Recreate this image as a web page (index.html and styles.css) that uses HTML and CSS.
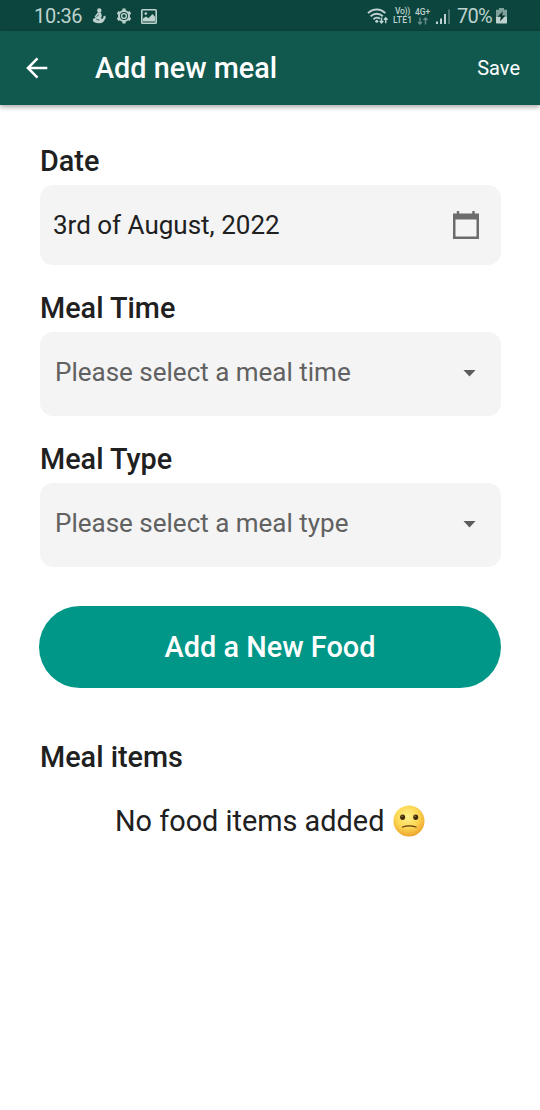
FILE: index.html
```html
<!DOCTYPE html>
<html lang="en">
<head>
<meta charset="utf-8">
<title>Add new meal</title>
<link rel="stylesheet" href="styles.css">
</head>
<body>
<div class="status">
  <span class="clock">10:36</span>
  <svg class="ic-app" width="14" height="16" viewBox="0 0 14 16" fill="currentColor"><circle cx="7.300" cy="2.500" r="2.200"/><path d="M5.800 4.500h3.200l.8 3.300-.9 2.700 1.700.3.900-1.400-.8-.5 2.500-1.500.8 3-.9-.2c-.5 3-2.600 5-6 5-3.300 0-5.700-.7-6.200-2.600-.4-1.800 1-2.700 2.800-2.600L2.600 8.600z"/><path d="M4.500 8.600l2.300-1.800M4.300 11.300l3 .8" stroke="#0c453d" stroke-width=".8"/></svg>
  <svg class="ic-gear" width="16" height="16" viewBox="0 0 16 16" fill="none" stroke="currentColor"><circle cx="8" cy="8" r="5" stroke-width="2"/><circle cx="8" cy="8" r="2.400" stroke-width="1.400"/><path d="M8 .6v2.600M8 12.800v2.600M1.600 4.300l2.200 1.300M12.200 10.400l2.200 1.300M1.600 11.700l2.200-1.300M12.200 5.600l2.200-1.300" stroke-width="3.200"/></svg>
  <svg class="ic-pic" width="16" height="15" viewBox="0 0 16 15"><rect x=".8" y=".8" width="14.400" height="13.400" rx=".8" fill="none" stroke="currentColor" stroke-width="1.600"/><path d="M2 12.500V9.500L5 7.500l2.500 1.800 4-4.300 2.500 2.800v4.700z" fill="currentColor"/><circle cx="4.800" cy="4.600" r="1.300" fill="currentColor"/></svg>
  <span class="spring"></span>
  <svg class="ic-wifi" width="22" height="17" viewBox="0 0 22 17" fill="none" stroke="currentColor" stroke-width="1.900"><path d="M1 5.200C6 .2 13.500.2 18.300 5.200M3.600 8.300c3.400-3.400 8.700-3.400 12.200 0M6.500 11.200c2-1.900 4.800-1.900 6.500-.3"/><circle cx="9.800" cy="13.300" r="1.500" fill="currentColor" stroke="none"/><path d="M14.500 9.500v5.500M12.700 13.100l1.800 1.900 1.800-1.900M18.700 15.300V9.800M16.900 11.700l1.800-1.900 1.800 1.900" stroke-width="1.400"/></svg>
  <span class="stack volte"><span class="vo">Vo))</span><span class="lte">LTE1</span></span>
  <span class="stack net"><span>4G+</span><svg width="12" height="8" viewBox="0 0 12 8" fill="none" stroke="currentColor" stroke-width="1.400" opacity=".5"><path d="M3 .5V7M1 4.900L3 7l2-2.100M8.500 7.500V1M6.500 3.100l2-2.100 2 2.100"/></svg></span>
  <svg class="ic-sig" width="14" height="15" viewBox="0 0 14 15" fill="currentColor"><path d="M0 12.500h2V15H0zM4 9.500h2V15H4zM8 5h2v10H8z"/><path d="M12 .5h2V15h-2z" opacity=".35"/></svg>
  <span class="pct">70%</span>
  <svg class="ic-bat" width="11" height="16" viewBox="0 0 11 16"><path d="M3 0h5v1.800h3V9H0V1.800h3z" fill="currentColor" opacity=".65"/><path d="M0 9h11v5.800q0 .8-.8.800H.8q-.8 0-.8-.8z" fill="currentColor"/><path d="M6.800 3.300L1.600 8.800h3.200L4 13.400l5.400-5.800H6.200z" fill="#0c352f"/></svg>
</div>
<header class="bar">
  <svg class="back" width="22" height="22" viewBox="0 0 22 22" fill="none" stroke="#fff" stroke-width="2.500"><path d="M21.300 11H2.200M11.500 1.300L1.900 11l9.600 9.700"/></svg>
  <h1 class="title">Add new meal</h1>
  <span class="save">Save</span>
</header>
<main class="content">
  <h2 class="label">Date</h2>
  <div class="field date"><span class="date-text">3rd of August, 2022</span>
    <svg width="26" height="28" viewBox="0 0 26 28" fill="#6c6c6c"><path fill-rule="evenodd" d="M3.800 0H6.200V2.500H19.300V0h2.400v2.500H26V28H0V2.500h3.800zM2.500 8.500v17h21v-17z"/></svg></div>
  <h2 class="label">Meal Time</h2>
  <div class="field select"><span class="time-text">Please select a meal time</span><i class="caret"></i></div>
  <h2 class="label">Meal Type</h2>
  <div class="field select"><span class="type-text">Please select a meal type</span><i class="caret"></i></div>
  <button class="add"><span>Add a New Food</span></button>
  <h2 class="label items">Meal items</h2>
  <p class="empty"><span>No food items added</span>
    <svg width="32" height="32" viewBox="0 0 32 32"><defs><radialGradient id="face" cx=".45" cy=".36" r=".65"><stop offset="0" stop-color="#fff08d"/><stop offset=".55" stop-color="#fdd854"/><stop offset="1" stop-color="#eda32d"/></radialGradient></defs><circle cx="16" cy="16" r="15.500" fill="url(#face)"/><ellipse cx="9.600" cy="12.300" rx="2.500" ry="2.700" fill="#422b0d"/><ellipse cx="22.700" cy="12.300" rx="2.500" ry="2.700" fill="#422b0d"/><circle cx="9.100" cy="11.300" r=".7" fill="#a58753"/><circle cx="22.200" cy="11.300" r=".7" fill="#a58753"/><path d="M9.500 22q6.500-2.300 13.500 0" fill="none" stroke="#5b3b16" stroke-width="1.300" stroke-linecap="round"/></svg></p>
</main>
</body>
</html>
```
FILE: styles.css
```css
* { box-sizing: border-box; }
body { margin: 0; min-height: 1110px; background: #fff; color: #202020; font-family: Roboto, sans-serif; }
svg { display: block; flex: none; }
h1, h2, p { margin: 0; }
span { white-space: nowrap; }
.status { display: flex; align-items: center; height: 31px; padding: 1px 33px 0 34px; background: #0c453d; color: #bdd2ce; }
.clock { width: 58px; font-size: 20px; letter-spacing: -.3px; }
.ic-gear { margin-left: 10px; }
.ic-pic { margin-left: 9px; }
.spring { flex: 1; }
.stack { display: flex; flex-direction: column; font-size: 8.500px; line-height: 9px; font-weight: 500; }
.volte { width: 22px; margin-left: 4px; }
.vo { padding-left: 2px; letter-spacing: -.3px; }
.lte { font-size: 8.500px; letter-spacing: .2px; }
.net { width: 21px; align-items: flex-start; }
.net svg { margin-left: 2px; }
.pct { width: 39px; margin-left: 7px; font-size: 20px; letter-spacing: -.7px; }
.bar { position: relative; display: flex; align-items: center; height: 74px; padding: 0 20px 0 26px; background: #11594f; color: #fff; box-shadow: 0 2px 5px rgba(0,0,0,.35); }
.title { margin-left: 47px; font-size: 28.800px; line-height: 34px; font-weight: 500; }
.save { margin-left: auto; padding-bottom: 1px; font-size: 20px; }
.content { padding: 39px 39px 0 40px; }
.label { height: 41px; font-size: 28.800px; line-height: 34px; font-weight: 500; }
.field { display: flex; align-items: center; justify-content: space-between; border-radius: 13px; background: #f4f4f4; font-size: 26px; }
.date { height: 80px; margin-bottom: 26px; padding: 0 22px 0 13px; }
.select { height: 84px; margin-bottom: 26px; padding: 0 25px 4px 15px; color: #616161; }
.caret { width: 13px; height: 7px; margin-top: 2px; background: #5c5c5c; clip-path: polygon(0 0, 100% 0, 50% 100%); }
.add { display: block; width: 462px; height: 82px; margin: 39px 0 52px -1px; padding: 0; border: 0; border-radius: 41px; background: #009788; color: #fff; font: 500 28.900px Roboto, sans-serif; }
.empty { display: flex; align-items: center; padding: 23px 0 0 75px; font-size: 28.850px; line-height: 34px; }
.empty svg { margin-left: 9px; }
```
